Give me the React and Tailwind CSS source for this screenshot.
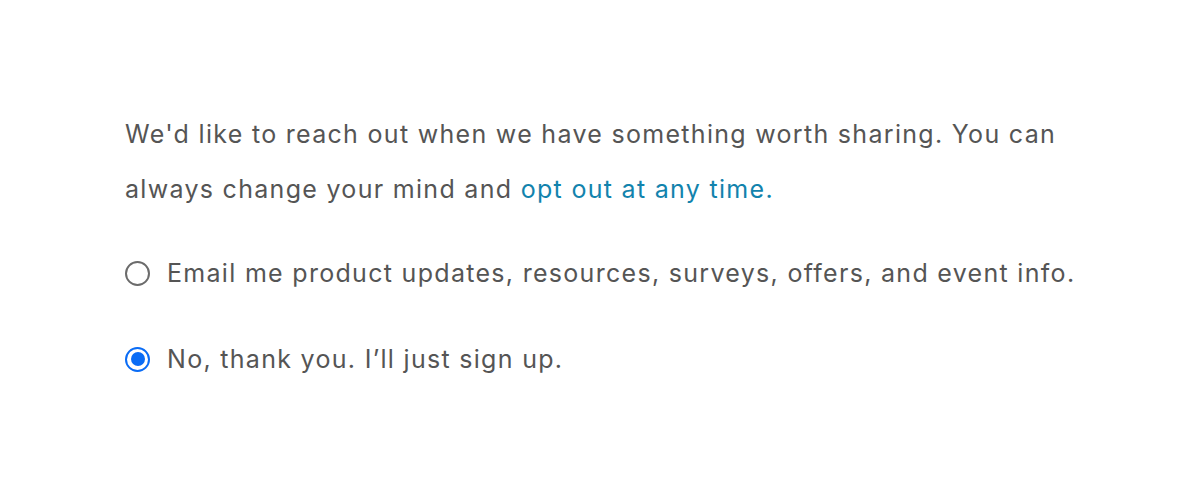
import { useState } from "react";

const Radio = ({ checked, onClick, children }) => (
  <label className="flex items-center gap-[17px] h-[30px] cursor-pointer" onClick={onClick}>
    {checked ? (
      <span className="w-[25px] h-[25px] shrink-0 rounded-full border-[2.5px] border-[#0a6cf5] flex items-center justify-center">
        <span className="w-[14px] h-[14px] rounded-full bg-[#0a6cf5]"></span>
      </span>
    ) : (
      <span className="w-[25px] h-[25px] shrink-0 rounded-full border-2 border-[#6b6b6b]"></span>
    )}
    <span className="leading-[30px]">{children}</span>
  </label>
);

const App = () => {
  const [choice, setChoice] = useState("no");

  return (
    <div
      className="w-[1200px] h-[501px] bg-white pt-[107px] pl-[125px] text-[#555555] text-[25px] tracking-[1.3px]"
      style={{ fontFamily: "Inter, 'Noto Sans', sans-serif" }}
    >
      <p className="leading-[55px] w-[960px]">
        We'd like to reach out when we have something worth sharing. You can
        always change your mind and{" "}
        <a href="#" className="text-[#1283ad]">
          opt out at any time.
        </a>
      </p>
      <div className="flex flex-col gap-[56px] mt-[41px]">
        <Radio checked={choice === "yes"} onClick={() => setChoice("yes")}>
          Email me product updates, resources, surveys, offers, and event info.
        </Radio>
        <Radio checked={choice === "no"} onClick={() => setChoice("no")}>
          No, thank you. I’ll just sign up.
        </Radio>
      </div>
    </div>
  );
};

export default App;
